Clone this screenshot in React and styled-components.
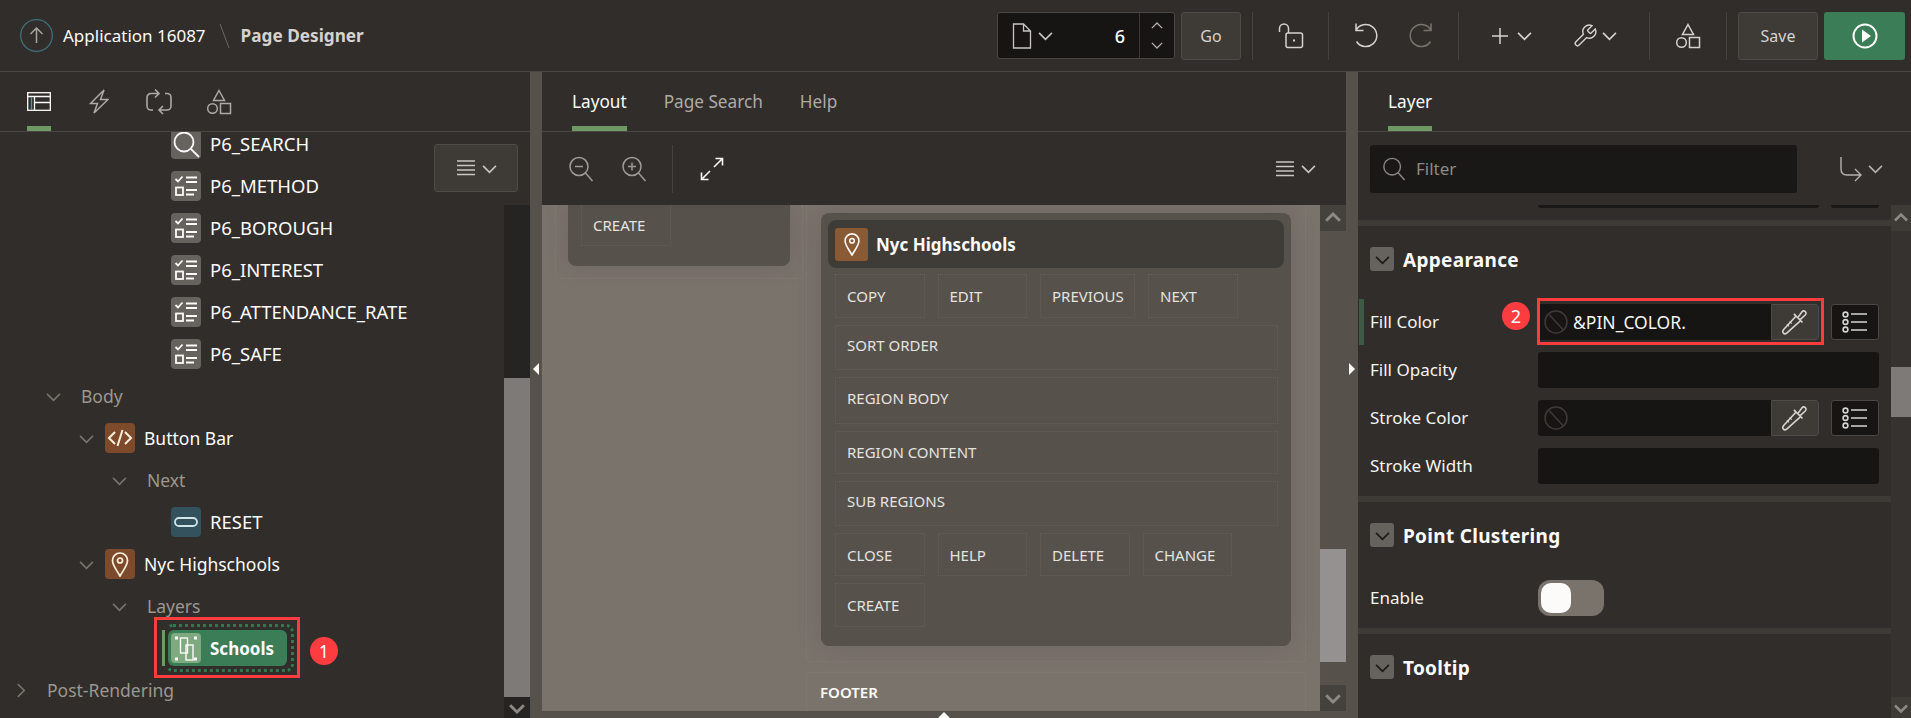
import React from 'react';
import styled, { createGlobalStyle } from 'styled-components';

const Global = createGlobalStyle`
  html, body { margin: 0; padding: 0; background: #312d2a; }
  body { font-family: "Noto Sans", "Open Sans", Arial, sans-serif; font-size: 17px; color: #fcfbfa; }
  * { box-sizing: border-box; }
`;

const Page = styled.div`
  width: 1911px;
  height: 718px;
  overflow: hidden;
  display: flex;
  flex-direction: column;
  background: #312d2a;
`;

// top bar
const Header = styled.header`
  height: 72px;
  flex: none;
  display: flex;
  align-items: center;
  justify-content: space-between;
  padding: 0 6px 0 20px;
  border-bottom: 1px solid #4a4641;
`;

const Crumbs = styled.div`
  display: flex;
  align-items: center;
`;

const AppName = styled.span`
  margin-left: 10px;
  font-size: 17px;
`;

const CrumbSlash = styled.svg`
  margin: 0 11px 0 13px;
  stroke: #6b6762;
  fill: none;
`;

const PageName = styled.span`
  font-weight: 700;
  font-size: 17.2px;
  color: #d5d3d0;
`;

const Tools = styled.div`
  display: flex;
  align-items: center;
`;

const PageField = styled.div`
  width: 178px;
  height: 47px;
  display: flex;
  align-items: stretch;
  background: #161513;
  border: 1px solid #4a4641;
  border-radius: 3px;
  margin-right: 6px;
`;

const PageFieldMain = styled.div`
  flex: 1;
  display: flex;
  align-items: center;
  gap: 6px;
  padding: 0 14px 0 14px;
  color: #c9c6c2;
`;

const PageNumber = styled.span`
  margin-left: auto;
  font-size: 18px;
  font-weight: 500;
  color: #fcfbfa;
`;

const Stepper = styled.div`
  width: 35px;
  display: flex;
  flex-direction: column;
  align-items: center;
  justify-content: space-around;
  padding: 4px 0;
  color: #b5b1ad;
  border-left: 1px solid #3e3a36;
`;

const TextButton = styled.button`
  width: ${({ $w }) => $w}px;
  height: 48px;
  border: 1px solid #4f4b46;
  border-radius: 3px;
  background: #3e3a36;
  color: #d5d3d0;
  font: inherit;
  font-size: 16px;
  padding: 0;
`;

const RunButton = styled.button`
  width: 81px;
  height: 48px;
  margin-left: 6px;
  border: 0;
  border-radius: 3px;
  background: #3b7d56;
  color: #fcfbfa;
  display: flex;
  align-items: center;
  justify-content: center;
  padding: 0;
`;

const ToolGroup = styled.div`
  width: ${({ $w }) => $w}px;
  height: 48px;
  display: flex;
  align-items: center;
  justify-content: center;
  gap: ${({ $gap }) => $gap || 0}px;
  margin-left: ${({ $ml }) => $ml || 0}px;
  border-left: 1px solid #45413c;
`;

const ToolIcon = styled.div`
  width: ${({ $w }) => ($w ? `${$w}px` : 'auto')};
  display: flex;
  align-items: center;
  justify-content: center;
  gap: ${({ $gap }) => $gap || 0}px;
  color: ${({ $dim }) => ($dim ? '#7a736c' : '#d5d3d0')};
`;

// three columns
const Work = styled.div`
  flex: 1;
  min-height: 0;
  display: flex;
`;

const Side = styled.section`
  width: ${({ $w }) => $w}px;
  flex: none;
  display: flex;
  flex-direction: column;
  position: relative;
  min-height: 0;
`;

const Center = styled.section`
  flex: 1;
  min-width: 0;
  display: flex;
  flex-direction: column;
`;

const Splitter = styled.div`
  width: 12px;
  flex: none;
  background: #56514b;
  display: flex;
  align-items: center;
  justify-content: center;
  padding-bottom: 52px;
`;

const Arrow = styled.i`
  display: block;
  width: 0;
  height: 0;
  border-top: 6px solid transparent;
  border-bottom: 6px solid transparent;
  ${({ $dir }) => ($dir === 'left' ? 'border-right: 6px solid #fcfbfa;' : 'border-left: 6px solid #fcfbfa;')}
`;

const TabBar = styled.nav`
  height: 60px;
  flex: none;
  display: flex;
  align-items: stretch;
  gap: ${({ $gap }) => $gap || 36}px;
  padding-left: ${({ $pl }) => $pl}px;
  border-bottom: 1px solid #4a4641;
`;

const Tab = styled.div`
  display: flex;
  align-items: center;
  justify-content: center;
  font-size: 17.2px;
  color: ${({ $active }) => ($active ? '#fcfbfa' : '#aeaaa6')};
  box-shadow: ${({ $active }) => ($active ? 'inset 0 -5px 0 #6f9a66' : 'none')};
`;

const IconTab = styled(Tab)`
  width: 24px;
  color: #aeaaa6;
`;

// left tree
const TreeBody = styled.div`
  flex: 1;
  min-height: 0;
  display: flex;
`;

const TreeClip = styled.div`
  flex: 1;
  min-width: 0;
  overflow: hidden;
`;

const TreeList = styled.ul`
  list-style: none;
  margin: -9px 0 0;
  padding: 0;
`;

const TreeRow = styled.li`
  height: 42px;
  display: flex;
  align-items: center;
  position: relative;
  padding-left: ${({ $indent }) => $indent}px;
  font-size: ${({ $caps }) => ($caps ? 18.5 : 17.5)}px;
  color: ${({ $muted }) => ($muted ? '#9c9791' : '#fcfbfa')};
`;

const RowLabel = styled.span`
  margin-top: ${({ $caps }) => ($caps ? -2 : 0)}px;
`;

const Twist = styled.span`
  width: 14px;
  flex: none;
  display: flex;
  justify-content: center;
  color: #7a736c;
  margin-right: ${({ $gap }) => $gap}px;
`;

const NodeIcon = styled.span`
  width: 30px;
  height: 30px;
  flex: none;
  margin-right: 9px;
  border-radius: 4px;
  display: flex;
  align-items: center;
  justify-content: center;
  color: ${({ $fg }) => $fg || '#fcfbfa'};
  background: ${({ $bg }) => $bg};
`;

const SelectedPill = styled.span`
  height: 36px;
  width: 119px;
  padding-left: 3px;
  display: flex;
  align-items: center;
  position: relative;
  border-radius: 6px;
  background: #3b7d56;
  font-size: 17px;
  font-weight: 700;

  &::before {
    content: '';
    position: absolute;
    left: -6px;
    top: 0;
    bottom: 0;
    width: 3px;
    background: #6f9a66;
  }

  &::after {
    content: '';
    position: absolute;
    inset: -6px -7px -6px -3px;
    border: 3px dotted #2f7a4f;
    border-left-color: transparent;
    border-radius: 8px;
  }
`;

const RedBox = styled.span`
  position: absolute;
  left: ${({ $x }) => $x}px;
  top: ${({ $y }) => $y}px;
  width: ${({ $w }) => $w}px;
  height: ${({ $h }) => $h}px;
  border: 3px solid #fd3c40;
  pointer-events: none;
`;

const Badge = styled.span`
  position: absolute;
  left: ${({ $x }) => $x}px;
  top: ${({ $y }) => $y}px;
  width: 28px;
  height: 28px;
  border-radius: 50%;
  background: #fd3c40;
  color: #fff;
  font-size: 18px;
  font-weight: 400;
  line-height: 28px;
  text-align: center;
`;

const Overflow = styled.button`
  position: absolute;
  left: 434px;
  top: 72px;
  width: 84px;
  height: 48px;
  border: 1px solid #4f4b46;
  border-radius: 3px;
  background: #3e3a36;
  color: #c9c6c2;
  display: flex;
  align-items: center;
  justify-content: center;
  gap: 6px;
  padding: 0;
`;

// scrollbars
const Scroll = styled.div`
  width: ${({ $w }) => $w}px;
  flex: none;
  display: flex;
  flex-direction: column;
  background: ${({ $track }) => $track};
`;

const ScrollButton = styled.div`
  height: ${({ $h }) => $h}px;
  flex: none;
  display: flex;
  align-items: center;
  justify-content: center;
  color: #8d8985;
  background: ${({ $bg }) => $bg};
`;

const ScrollGap = styled.div`
  flex: ${({ $grow }) => ($grow ? 1 : 'none')};
  height: ${({ $h }) => ($h ? `${$h}px` : 'auto')};
  background: ${({ $bg }) => $bg || 'transparent'};
`;

// center
const Toolbar = styled.div`
  height: 73px;
  flex: none;
  display: flex;
  align-items: center;
  padding: 0 ${({ $pr }) => $pr || 0}px 0 ${({ $pl }) => $pl || 0}px;
`;

const ZoomIcon = styled.span`
  width: ${({ $w }) => $w}px;
  margin-left: ${({ $ml }) => $ml || 0}px;
  display: flex;
  justify-content: center;
  color: ${({ $bright }) => ($bright ? '#fcfbfa' : '#a09b96')};
`;

const VRule = styled.span`
  width: 1px;
  height: 48px;
  background: #45413c;
  margin: 0 ${({ $m }) => $m}px;
`;

const MenuGlyph = styled.span`
  margin-left: auto;
  display: flex;
  align-items: center;
  gap: 6px;
  color: #c9c6c2;
`;

const CanvasWrap = styled.div`
  flex: 1;
  min-height: 0;
  display: flex;
`;

const Canvas = styled.div`
  flex: 1;
  min-width: 0;
  overflow: hidden;
  display: flex;
  align-items: flex-start;
  gap: 3px;
  padding-left: 13px;
  background: #7a736c;
`;

const BottomStrip = styled.div`
  height: 7px;
  flex: none;
  background: #56514b;
  display: flex;
  justify-content: center;
  overflow: hidden;
`;

const UpTriangle = styled.i`
  display: block;
  width: 0;
  height: 0;
  margin-top: 1px;
  border-left: 6px solid transparent;
  border-right: 6px solid transparent;
  border-bottom: 6px solid #fcfbfa;
`;

const Slot = styled.div`
  width: ${({ $w }) => $w}px;
  flex: none;
  padding: ${({ $pad }) => $pad};
  border: 1px dotted rgba(170, 164, 158, 0.2);
  border-top: 0;
  border-radius: 0 0 4px 4px;
`;

const RightStack = styled.div`
  width: 500px;
  flex: none;
  display: flex;
  flex-direction: column;
  gap: 10px;
`;

const Card = styled.div`
  background: #56514b;
  border-radius: ${({ $flat }) => ($flat ? '0 0 8px 8px' : '8px')};
  box-shadow: 0 0 26px rgba(40, 36, 32, 0.14);
  padding: ${({ $pad }) => $pad};
`;

const CardTitle = styled.div`
  height: 48px;
  display: flex;
  align-items: center;
  padding-left: 7px;
  margin-bottom: 6px;
  background: #3f3b37;
  border-radius: 8px;
  font-weight: 700;
  font-size: 17px;
`;

const TitleIcon = styled.span`
  width: 33px;
  height: 33px;
  margin-right: 8px;
  border-radius: 3px;
  background: #8a5a35;
  display: flex;
  align-items: center;
  justify-content: center;
  color: #fcfbfa;
`;

const Cells = styled.div`
  display: flex;
  flex-direction: column;
  gap: 7px;
  padding: 0 6px 0 7px;
`;

const CellRow = styled.div`
  display: flex;
  gap: 13px;
`;

const Cell = styled.div`
  height: ${({ $h }) => $h}px;
  width: ${({ $w }) => ($w ? `${$w}px` : '100%')};
  flex: ${({ $w }) => ($w ? 'none' : '1')};
  display: flex;
  align-items: center;
  padding: 0 0 ${({ $lift }) => $lift || 0}px 11px;
  font-size: 15px;
  color: #e5e3e0;
  border: 1px dotted rgba(170, 164, 158, 0.16);
  border-top-width: ${({ $open }) => ($open ? 0 : 1)}px;
`;

const FooterSlot = styled.div`
  height: 60px;
  padding: 9px 0 0 13px;
  border: 1px dotted rgba(170, 164, 158, 0.2);
  border-radius: 4px 4px 0 0;
  font-size: 15px;
  font-weight: 600;
  color: #fcfbfa;
`;

// right panel
const FilterBar = styled.div`
  height: 73px;
  flex: none;
  display: flex;
  align-items: center;
  padding-left: 12px;
`;

const FilterBox = styled.div`
  width: 427px;
  height: 48px;
  display: flex;
  align-items: center;
  gap: 10px;
  padding-left: 12px;
  border-radius: 3px;
  background: #1a1816;
  color: #8d8985;
`;

const GoTo = styled.div`
  margin-left: 42px;
  display: flex;
  align-items: center;
  gap: 5px;
  color: #b5b1ad;
`;

const PropBody = styled.div`
  flex: 1;
  min-height: 0;
  display: flex;
`;

const PropColumn = styled.div`
  flex: 1;
  min-width: 0;
  overflow: hidden;
`;

const ClippedRow = styled.div`
  height: 15px;
  display: flex;
  align-items: flex-start;
  gap: 12px;
  padding-left: 180px;
`;

const ClippedField = styled.div`
  width: ${({ $w }) => $w}px;
  height: 3px;
  background: #1a1816;
  border-radius: 0 0 3px 3px;
`;

const Section = styled.div`
  border-top: 6px solid #3e3a36;
  padding: 21px 12px ${({ $pb }) => $pb || 0}px;
`;

const SectionHead = styled.div`
  display: flex;
  align-items: center;
  gap: 9px;
  height: 24px;
  margin-bottom: ${({ $mb }) => $mb || 0}px;
`;

const SectionTitle = styled.span`
  margin-top: 2px;
  font-size: 19px;
  font-weight: 700;
  letter-spacing: 0.3px;
`;

const Toggle = styled.span`
  width: 24px;
  height: 24px;
  border-radius: 3px;
  background: #66625d;
  color: #1a1816;
  display: flex;
  align-items: center;
  justify-content: center;
`;

const Props = styled.div`
  display: flex;
  flex-direction: column;
  gap: 12px;
`;

const PropRow = styled.div`
  display: grid;
  grid-template-columns: 168px 1fr;
  align-items: center;
  height: 36px;
  position: relative;

  ${({ $marked }) =>
    $marked &&
    `&::before {
      content: '';
      position: absolute;
      left: -11px;
      top: -5px;
      width: 5px;
      height: 46px;
      background: #3c5a45;
    }`}
`;

const PropLabel = styled.span`
  margin-top: -2px;
  font-size: 17px;
  color: #f5f4f2;
`;

const Controls = styled.div`
  display: flex;
  gap: 12px;
  height: 36px;
`;

const ColorField = styled.div`
  width: 281px;
  display: flex;
  align-items: stretch;
  background: #161513;
  border-radius: 3px;
`;

const ColorValue = styled.div`
  flex: 1;
  display: flex;
  align-items: center;
  gap: 5px;
  padding-left: 6px;
  font-size: 17.5px;
  color: #3e3a36;

  span {
    color: #f5f4f2;
  }
`;

const DropperButton = styled.span`
  width: 48px;
  display: flex;
  align-items: center;
  justify-content: center;
  background: #3e3a36;
  border: 1px solid #4f4b46;
  border-radius: 0 3px 3px 0;
  color: #d5d3d0;
`;

const ListButton = styled.span`
  width: 48px;
  display: flex;
  align-items: center;
  justify-content: center;
  background: #161513;
  border: 1px solid #4a4641;
  border-radius: 3px;
  color: #d5d3d0;
`;

const Blank = styled.div`
  height: 36px;
  border-radius: 3px;
  background: #161513;
`;

const Switch = styled.span`
  width: 66px;
  height: 36px;
  padding: 3px;
  display: block;
  border-radius: 12px;
  background: #7a736c;

  &::before {
    content: '';
    display: block;
    width: 30px;
    height: 30px;
    border-radius: 10px;
    background: #fcfbfa;
  }
`;

const Ico = styled.svg`
  display: block;
  flex: none;
  fill: none;
  stroke: currentColor;
  stroke-width: ${({ $sw }) => $sw || 1.5};
`;

const Chevron = ({ dir = 'down', size = 15, sw = 1.5 }) => {
  const paths = {
    down: 'M1 4.500l6 6 6-6',
    up: 'M1 9.500l6-6 6 6',
    right: 'M4.500 1l6 6-6 6',
  };
  return (
    <Ico $sw={sw} width={size} height={size} viewBox="0 0 14 14">
      <path d={paths[dir]} />
    </Ico>
  );
};

const MenuLines = () => (
  <Ico width="20" height="18" viewBox="0 0 20 18">
    <path d="M1 2h18M1 6.500h18M1 11h18M1 15.500h18" />
  </Ico>
);

const Magnifier = ({ size = 26, mark }) => (
  <Ico width={size} height={size} viewBox="0 0 26 26">
    <circle cx="11" cy="10.500" r="9" />
    <path d="M17.500 17l7 8" />
    {mark && <path d="M7 10.500h8" />}
    {mark === 'plus' && <path d="M11 6.500v8" />}
  </Ico>
);

const Shapes = () => (
  <Ico width="26" height="26" viewBox="0 0 26 26">
    <path d="M13 1.500l5.500 10h-11z" />
    <circle cx="6.500" cy="19.500" r="4.800" />
    <rect x="14.500" y="14.500" width="10" height="10" />
  </Ico>
);

const Dropper = () => (
  <Ico width="28" height="28" viewBox="0 0 26 26" $sw={1.5}>
    <path d="M14 7.500L2.500 20c-1 1.200-1 2.500-.3 3.300.8.800 2.200.8 3.300-.2L18 12" />
    <path d="M12 5.500l8 8" />
    <path d="M16 8.500l3.500-5c2-2.300 5.200.8 3 3l-5 4.500" />
    <path d="M8 12.500l2 2M5.500 15l2 2" strokeWidth="1.100" />
  </Ico>
);

const OptionList = () => (
  <Ico width="26" height="22" viewBox="0 0 26 22" $sw={1.6}>
    <circle cx="3.500" cy="3.500" r="2.400" />
    <circle cx="3.500" cy="11" r="2.400" />
    <circle cx="3.500" cy="18.500" r="2.400" />
    <path d="M9 3h16M9 11h16M9 19h16" />
  </Ico>
);

const NoColor = () => (
  <Ico width="24" height="24" viewBox="0 0 24 24" $sw={1.5}>
    <circle cx="12" cy="12" r="11" />
    <path d="M4.500 4l15 16" />
  </Ico>
);

const ItemListIcon = () => (
  <Ico width="26" height="26" viewBox="0 0 26 26" $sw={1.8}>
    <path d="M2.500 6l2.500 2.500L9.500 3.500M13 4.500h11M13 9h11M13 17h11M13 21.500h8" />
    <rect x="3" y="14.500" width="7" height="7.500" />
  </Ico>
);

const SearchItemIcon = () => (
  <Ico width="28" height="28" viewBox="0 0 28 28" $sw={1.8}>
    <circle cx="12" cy="12" r="9.500" />
    <path d="M19 19l8 8" />
  </Ico>
);

const CodeIcon = () => (
  <Ico width="26" height="26" viewBox="0 0 26 26" $sw={2}>
    <path d="M8 7l-6 6 6 6M18 7l6 6-6 6M15.500 5l-5 16" />
  </Ico>
);

const ButtonIcon = () => (
  <Ico width="26" height="14" viewBox="0 0 26 14" $sw={1.8}>
    <rect x="2" y="3" width="22" height="8" rx="4" />
  </Ico>
);

const PinIcon = ({ size = 26 }) => (
  <Ico width={size} height={size} viewBox="0 0 26 26" $sw={1.7}>
    <path d="M13 25C10 19.500 5.500 14.500 5.500 9.500a7.500 7.500 0 0 1 15 0C20.500 14.500 16 19.500 13 25z" />
    <circle cx="13" cy="9.500" r="2.500" />
  </Ico>
);

const LayerIcon = () => (
  <svg width="30" height="30" viewBox="0 0 30 30" fill="none" stroke="#fcfbfa" strokeWidth="1.4">
    <path d="M4 5h3M23 5h3M4 26h3M23 26h3" strokeWidth="3" />
    <rect x="9.500" y="5" width="7" height="15" />
    <rect x="15" y="12" width="7" height="15" />
  </svg>
);

const rows = [
  { id: 'search', label: 'P6_SEARCH', indent: 171, caps: true, icon: <SearchItemIcon />, bg: '#66625d' },
  { id: 'method', label: 'P6_METHOD', indent: 171, caps: true, icon: <ItemListIcon />, bg: '#66625d' },
  { id: 'borough', label: 'P6_BOROUGH', indent: 171, caps: true, icon: <ItemListIcon />, bg: '#66625d' },
  { id: 'interest', label: 'P6_INTEREST', indent: 171, caps: true, icon: <ItemListIcon />, bg: '#66625d' },
  { id: 'rate', label: 'P6_ATTENDANCE_RATE', indent: 171, caps: true, icon: <ItemListIcon />, bg: '#66625d' },
  { id: 'safe', label: 'P6_SAFE', indent: 171, caps: true, icon: <ItemListIcon />, bg: '#66625d' },
  { id: 'body', label: 'Body', indent: 46, twist: 'down', gap: 21, muted: true },
  { id: 'bar', label: 'Button Bar', indent: 79, twist: 'down', gap: 12, icon: <CodeIcon />, bg: '#7d4a2c', fg: '#fdf0dc' },
  { id: 'next', label: 'Next', indent: 112, twist: 'down', gap: 21, muted: true },
  { id: 'reset', label: 'RESET', indent: 171, caps: true, icon: <ButtonIcon />, bg: '#33525e', fg: '#cfe5ea' },
  { id: 'nyc', label: 'Nyc Highschools', indent: 79, twist: 'down', gap: 12, icon: <PinIcon />, bg: '#7d4a2c', fg: '#fdf0dc' },
  { id: 'layers', label: 'Layers', indent: 112, twist: 'down', gap: 21, muted: true },
];

const AppHeader = () => (
  <Header>
    <Crumbs>
      <svg width="33" height="33" viewBox="0 0 33 33" fill="none">
        <circle cx="16.500" cy="16.500" r="15.800" stroke="#3f6f7b" strokeWidth="1.3" />
        <path d="M16.500 24V9.500M10.500 15l6-6 6 6" stroke="#a8a39e" strokeWidth="1.5" />
      </svg>
      <AppName>Application 16087</AppName>
      <CrumbSlash width="11" height="24" viewBox="0 0 11 24">
        <path d="M1 0l9 24" />
      </CrumbSlash>
      <PageName>Page Designer</PageName>
    </Crumbs>
    <Tools>
      <PageField>
        <PageFieldMain>
          <Ico width="20" height="26" viewBox="0 0 20 26" $sw={1.3}>
            <path d="M1.500 1h10l7 7v17h-17zM11.500 1v7h7" />
          </Ico>
          <Chevron />
          <PageNumber>6</PageNumber>
        </PageFieldMain>
        <Stepper>
          <Chevron dir="up" size={12} />
          <Chevron size={12} />
        </Stepper>
      </PageField>
      <TextButton $w={60}>Go</TextButton>
      <ToolGroup $w={76} $ml={11}>
        <ToolIcon>
          <Ico width="26" height="26" viewBox="0 0 26 26" $sw={1.5}>
            <path d="M1.500 9V5.500a4.500 4.500 0 0 1 9 0V10" />
            <rect x="8" y="10" width="16.500" height="14.500" rx="2" />
            <path d="M16 16.500v2" strokeWidth="2" />
          </Ico>
        </ToolIcon>
      </ToolGroup>
      <ToolGroup $w={130}>
        <ToolIcon $w={54}>
          <Ico width="25" height="25" viewBox="0 0 25 25" $sw={1.5}>
            <path d="M2 .5V7.500H9.500M2 7.500A11 11 0 1 1 2.500 18.500" />
          </Ico>
        </ToolIcon>
        <ToolIcon $w={54} $dim>
          <Ico width="25" height="25" viewBox="0 0 25 25" $sw={1.5}>
            <path d="M23 .5V7.500H15.500M23 7.500A11 11 0 1 0 22.500 18.500" />
          </Ico>
        </ToolIcon>
      </ToolGroup>
      <ToolGroup $w={191} $gap={40}>
        <ToolIcon $gap={9}>
          <Ico width="16" height="16" viewBox="0 0 16 16" $sw={1.5}>
            <path d="M8 0v16M0 8h16" />
          </Ico>
          <Chevron />
        </ToolIcon>
        <ToolIcon $gap={4}>
          <Ico width="26" height="26" viewBox="0 0 24 24" $sw={1.3}>
            <path d="M14.700 6.300a1 1 0 0 0 0 1.400l1.600 1.600a1 1 0 0 0 1.400 0l3.770-3.770a6 6 0 0 1-7.940 7.940l-6.910 6.910a2.120 2.120 0 0 1-3-3l6.910-6.910a6 6 0 0 1 7.940-7.940l-3.760 3.760z" />
          </Ico>
          <Chevron />
        </ToolIcon>
      </ToolGroup>
      <ToolGroup $w={77}>
        <ToolIcon>
          <Shapes />
        </ToolIcon>
      </ToolGroup>
      <ToolGroup $w={12} />
      <TextButton $w={80}>Save</TextButton>
      <RunButton>
        <svg width="26" height="26" viewBox="0 0 26 26" fill="none">
          <circle cx="13" cy="13" r="11.500" stroke="#fcfbfa" strokeWidth="2" />
          <path d="M10 6.500l9 6.500-9 6.500z" fill="#fcfbfa" />
        </svg>
      </RunButton>
    </Tools>
  </Header>
);

const LeftPanel = () => (
  <Side $w={530}>
    <TabBar $pl={27} $gap={36}>
      <IconTab $active>
        <svg width="24" height="19" viewBox="0 0 24 19" fill="none" stroke="#fcfbfa" strokeWidth="1.300">
          <rect x=".7" y=".7" width="22.600" height="17.600" />
          <path d="M.7 4.500h22.600M7.500 4.500v13.800M7.500 10.500h15.800" />
          <path d="M4.500 5v13" stroke="#3f9ac9" />
        </svg>
      </IconTab>
      <IconTab>
        <Ico width="20" height="25" viewBox="0 0 20 25" $sw={1.5}>
          <path d="M15 1L1.500 14.500H8.500L5 24L19 10.500H11.500z" />
        </Ico>
      </IconTab>
      <IconTab>
        <Ico width="26" height="26" viewBox="0 0 26 26" $sw={1.6}>
          <path d="M12 4.500H5a4 4 0 0 0-4 4V17a4 4 0 0 0 4 4h2M9 .5l4 4-4 4" />
          <path d="M14 21h7a4 4 0 0 0 4-4V8.500a4 4 0 0 0-4-4h-2M17 17l-4 4 4 4" />
        </Ico>
      </IconTab>
      <IconTab>
        <Shapes />
      </IconTab>
    </TabBar>
    <TreeBody>
      <TreeClip>
        <TreeList>
          {rows.map((row) => (
            <TreeRow key={row.id} $indent={row.indent} $muted={row.muted} $caps={row.caps}>
              {row.twist && (
                <Twist $gap={row.gap}>
                  <Chevron dir={row.twist} />
                </Twist>
              )}
              {row.icon && (
                <NodeIcon $bg={row.bg} $fg={row.fg}>
                  {row.icon}
                </NodeIcon>
              )}
              <RowLabel $caps={row.caps}>{row.label}</RowLabel>
            </TreeRow>
          ))}
          <TreeRow $indent={168}>
            <SelectedPill>
              <NodeIcon $bg="#7fa97f">
                <LayerIcon />
              </NodeIcon>
              Schools
            </SelectedPill>
            <RedBox $x={154} $y={-10} $w={146} $h={61} />
            <Badge $x={310} $y={10}>1</Badge>
          </TreeRow>
          <TreeRow $indent={13} $muted>
            <Twist $gap={20}>
              <Chevron dir="right" />
            </Twist>
            Post-Rendering
          </TreeRow>
        </TreeList>
      </TreeClip>
      <Scroll $w={26} $track="transparent">
        <ScrollGap $h={73} />
        <ScrollGap $grow $bg="#262422" />
        <ScrollGap $h={319} $bg="#7d7a78" />
        <ScrollButton $h={21} $bg="#262422">
          <Chevron sw={2.5} size={16} />
        </ScrollButton>
      </Scroll>
    </TreeBody>
    <Overflow>
      <MenuLines />
      <Chevron />
    </Overflow>
  </Side>
);

const slotCells = [
  { h: 44, items: [['COPY', 89.5], ['EDIT', 89.5], ['PREVIOUS', 95], ['NEXT', 89.5]] },
  { h: 45, lift: 5, items: [['SORT ORDER']] },
  { h: 47, lift: 5, items: [['REGION BODY']] },
  { h: 43, lift: 2, items: [['REGION CONTENT']] },
  { h: 45, lift: 5, items: [['SUB REGIONS']] },
  { h: 43, items: [['CLOSE', 89.5], ['HELP', 89.5], ['DELETE', 89.5], ['CHANGE', 89.5]] },
  { h: 44, items: [['CREATE', 89.5]] },
];

const CenterPanel = () => (
  <Center>
    <TabBar $pl={30} $gap={37}>
      <Tab $active>Layout</Tab>
      <Tab>Page Search</Tab>
      <Tab>Help</Tab>
    </TabBar>
    <Toolbar $pl={24} $pr={30}>
      <ZoomIcon $w={30}>
        <Magnifier mark="minus" />
      </ZoomIcon>
      <ZoomIcon $w={30} $ml={23}>
        <Magnifier mark="plus" />
      </ZoomIcon>
      <VRule $m={23} />
      <ZoomIcon $w={30} $bright $ml={1}>
        <Ico width="24" height="24" viewBox="0 0 24 24" $sw={1.6}>
          <path d="M14 10l8-8M15.500 1.500H22.500V8.500M10 14l-8 8M1.500 15.500V22.500H8.500" />
        </Ico>
      </ZoomIcon>
      <MenuGlyph>
        <MenuLines />
        <Chevron />
      </MenuGlyph>
    </Toolbar>
    <CanvasWrap>
      <Canvas>
        <Slot $w={248} $pad="0 12px 12px">
          <Card $flat $pad="0 13px 20px">
            <Cell $h={41} $w={89.5} $open>CREATE</Cell>
          </Card>
        </Slot>
        <RightStack>
          <Slot $w={500} $pad="8px 14px 15px">
            <Card $pad="7px 7px 19px">
              <CardTitle>
                <TitleIcon>
                  <PinIcon size={24} />
                </TitleIcon>
                Nyc Highschools
              </CardTitle>
              <Cells>
                {slotCells.map((row) => (
                  <CellRow key={row.items[0][0]}>
                    {row.items.map(([label, w]) => (
                      <Cell key={label} $h={row.h} $w={w} $lift={row.lift}>{label}</Cell>
                    ))}
                  </CellRow>
                ))}
              </Cells>
            </Card>
          </Slot>
          <FooterSlot>FOOTER</FooterSlot>
        </RightStack>
      </Canvas>
      <Scroll $w={26} $track="#56514b">
        <ScrollButton $h={26} $bg="#45413c">
          <Chevron dir="up" sw={2.5} size={16} />
        </ScrollButton>
        <ScrollGap $h={318} />
        <ScrollGap $h={113} $bg="#949190" />
        <ScrollGap $grow />
        <ScrollButton $h={26} $bg="#45413c">
          <Chevron sw={2.5} size={16} />
        </ScrollButton>
      </Scroll>
    </CanvasWrap>
    <BottomStrip>
      <UpTriangle />
    </BottomStrip>
  </Center>
);

const ColorControls = ({ value }) => (
  <Controls>
    <ColorField>
      <ColorValue>
        <NoColor />
        <span>{value}</span>
      </ColorValue>
      <DropperButton>
        <Dropper />
      </DropperButton>
    </ColorField>
    <ListButton>
      <OptionList />
    </ListButton>
  </Controls>
);

const SectionHeading = ({ title, mb }) => (
  <SectionHead $mb={mb}>
    <Toggle>
      <Chevron />
    </Toggle>
    <SectionTitle>{title}</SectionTitle>
  </SectionHead>
);

const RightPanel = () => (
  <Side $w={553}>
    <TabBar $pl={30}>
      <Tab $active>Layer</Tab>
    </TabBar>
    <FilterBar>
      <FilterBox>
        <Magnifier size={24} />
        Filter
      </FilterBox>
      <GoTo>
        <Ico width="24" height="28" viewBox="0 0 24 28" $sw={1.4}>
          <path d="M2 2v12c0 4 2 6 6 6h14M16 14l6 6-6 6" />
        </Ico>
        <Chevron />
      </GoTo>
    </FilterBar>
    <PropBody>
      <PropColumn>
        <ClippedRow>
          <ClippedField $w={281} />
          <ClippedField $w={48} />
        </ClippedRow>
        <Section $pb={12}>
          <SectionHeading title="Appearance" mb={33} />
          <Props>
            <PropRow $marked>
              <PropLabel>Fill Color</PropLabel>
              <ColorControls value="&PIN_COLOR." />
              <RedBox $x={167} $y={-6} $w={287} $h={47} />
              <Badge $x={132} $y={-2}>2</Badge>
            </PropRow>
            <PropRow>
              <PropLabel>Fill Opacity</PropLabel>
              <Blank />
            </PropRow>
            <PropRow>
              <PropLabel>Stroke Color</PropLabel>
              <ColorControls value="" />
            </PropRow>
            <PropRow>
              <PropLabel>Stroke Width</PropLabel>
              <Blank />
            </PropRow>
          </Props>
        </Section>
        <Section $pb={12}>
          <SectionHeading title="Point Clustering" mb={33} />
          <PropRow>
            <PropLabel>Enable</PropLabel>
            <Switch />
          </PropRow>
        </Section>
        <Section>
          <SectionHeading title="Tooltip" />
        </Section>
      </PropColumn>
      <Scroll $w={20} $track="#363230">
        <ScrollButton $h={26} $bg="#3e3a36">
          <Chevron dir="up" sw={2.5} size={14} />
        </ScrollButton>
        <ScrollGap $h={136} />
        <ScrollGap $h={50} $bg="#7d7a78" />
        <ScrollGap $grow />
        <ScrollButton $h={21} $bg="#3e3a36">
          <Chevron sw={2.5} size={14} />
        </ScrollButton>
      </Scroll>
    </PropBody>
  </Side>
);

export default function App() {
  return (
    <Page>
      <Global />
      <AppHeader />
      <Work>
        <LeftPanel />
        <Splitter>
          <Arrow $dir="left" />
        </Splitter>
        <CenterPanel />
        <Splitter>
          <Arrow $dir="right" />
        </Splitter>
        <RightPanel />
      </Work>
    </Page>
  );
}
